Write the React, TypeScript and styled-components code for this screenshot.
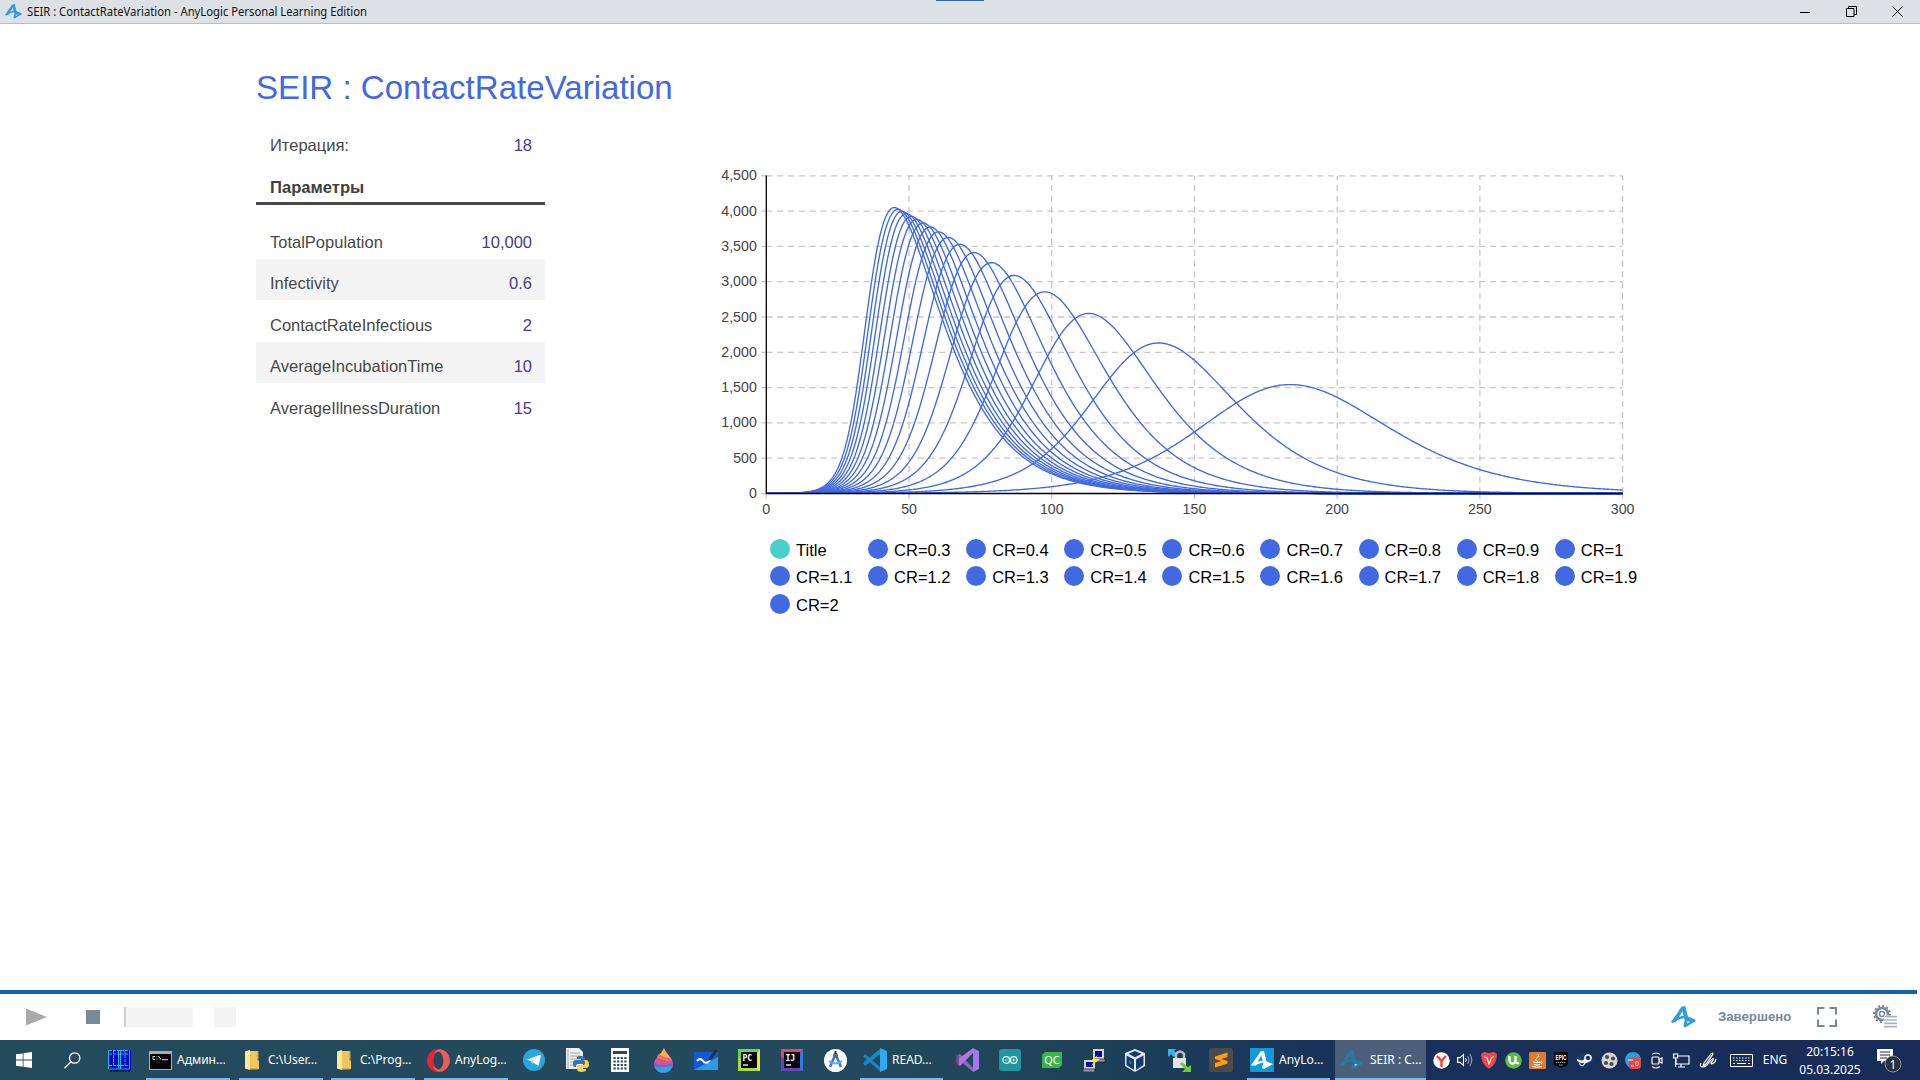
import React from "react";
import styled, { createGlobalStyle } from "styled-components";

const Global = createGlobalStyle`
  * { box-sizing: border-box; }
  body { margin: 0; background: #fff; overflow: hidden; }
`;

const sans = `"Liberation Sans", Arial, sans-serif`;
const ui = `"Noto Sans", "Open Sans", sans-serif`;

const Screen = styled.div`
  width: 1920px;
  height: 1080px;
  display: flex;
  flex-direction: column;
  background: #fff;
  font-family: ${sans};
  overflow: hidden;
`;

/* ---------- window title bar ---------- */

const TitleBar = styled.header`
  position: relative;
  flex: none;
  height: 24px;
  display: flex;
  align-items: center;
  background: #dde1e6;
  border-bottom: 1px solid #b9bdc1;
  padding-left: 5px;
`;
const SnapMark = styled.i`
  position: absolute;
  left: 936px;
  top: 0;
  width: 48px;
  height: 1px;
  background: #2d6aa5;
`;
const WindowTitle = styled.span`
  flex: 1;
  margin-left: 4px;
  font: 12px/22px ${ui};
  color: #111;
`;
const TitleText = styled.svg`
  display: block;
  width: 400px;
  height: 22px;
`;
const WindowButton = styled.span`
  width: 46px;
  height: 22px;
  display: grid;
  place-items: center;
`;

/* ---------- model area ---------- */

const Workspace = styled.main`
  flex: 1;
  min-height: 0;
  display: flex;
  flex-direction: column;
  padding: 43px 0 0 256px;
`;
const Heading = styled.h1`
  margin: 0;
  height: 41px;
  font: 33.1px/41px ${sans};
  color: #4169e1;
`;
const Columns = styled.div`
  display: flex;
  align-items: flex-start;
`;
const Panel = styled.section`
  width: 289px;
  padding-top: 17px;
`;
const Row = styled.div<{ $striped?: boolean; $pad?: number }>`
  display: flex;
  justify-content: space-between;
  height: ${(p) => (p.$striped ? 41 : 42)}px;
  padding: ${(p) => p.$pad ?? (p.$striped ? 4 : 5)}px 13px 0 14px;
  line-height: 41px;
  font-size: 16.5px;
  color: #484848;
  background: ${(p) => (p.$striped ? "#f4f4f4" : "transparent")};
`;
const Value = styled.span`
  color: #483d8b;
`;
const SectionTitle = styled.div`
  height: 38px;
  margin-bottom: 12px;
  padding-left: 14px;
  font-weight: 700;
  font-size: 16.6px;
  line-height: 41px;
  color: #404040;
  border-bottom: 3px solid #484848;
`;
const ChartArea = styled.section`
  margin: 52px 0 0 165px;
  width: 960px;
`;
const Plot = styled.svg`
  display: block;
  font-family: ${sans};
  font-size: 14.2px;
  fill: #444;
`;
const Legend = styled.div`
  display: grid;
  grid-template-columns: repeat(9, 98.1px);
  grid-auto-rows: 27.6px;
  margin: 15px 0 0 60px;
`;
const LegendItem = styled.div`
  display: flex;
  align-items: center;
  gap: 6px;
  font-size: 16.5px;
  color: #000;
  white-space: nowrap;
`;
const Dot = styled.i<{ $color: string }>`
  width: 20px;
  height: 20px;
  border-radius: 50%;
  background: ${(p) => p.$color};
`;
const LegendLabel = styled.span`
  padding-top: 3px;
`;

/* ---------- run control bar ---------- */

const ControlBar = styled.footer`
  flex: none;
  height: 46px;
  display: flex;
  align-items: flex-start;
`;
const Progress = styled.div`
  flex: none;
  height: 4px;
  width: 1917px;
  background: #1464a5;
`;
const PlayIcon = styled.svg`
  margin: 14px 0 0 26px;
`;
const StopIcon = styled.i`
  width: 14px;
  height: 14px;
  margin: 16px 0 0 39px;
  background: #778899;
`;
const Block = styled.i<{ $w: number; $gap: number; $edge?: boolean }>`
  width: ${(p) => p.$w}px;
  height: 20px;
  margin: 13px 0 0 ${(p) => p.$gap}px;
  background: #f4f4f4;
  border-left: ${(p) => (p.$edge ? "2px solid #d0d0d0" : "none")};
`;
const RightTools = styled.div`
  margin-left: auto;
  height: 46px;
  display: flex;
  align-items: center;
  padding-right: 22px;
`;
const Status = styled.span`
  width: 72px;
  margin: 0 27px 0 22px;
  font: 700 13.2px/20px ${sans};
  color: #778899;
  white-space: nowrap;
`;
const GearSlot = styled.span`
  display: flex;
  margin-left: 36px;
`;

/* ---------- taskbar ---------- */

const Taskbar = styled.nav`
  flex: none;
  height: 40px;
  display: flex;
  background: linear-gradient(90deg, #234b5c 0%, #224a5c 45%, #1d4159 57%, #193459 68%, #17305a 76%, #172c58 100%);
  color: #fff;
`;
const Slot = styled.div<{ $w: number }>`
  flex: none;
  width: ${(p) => p.$w}px;
  height: 40px;
  display: flex;
  align-items: center;
  justify-content: center;
`;
const Task = styled.div<{ $w: number; $gap: number; $active?: boolean }>`
  flex: none;
  width: ${(p) => p.$w}px;
  margin-left: ${(p) => p.$gap}px;
  height: 40px;
  display: flex;
  align-items: center;
  gap: 5px;
  padding-left: 3px;
  background: ${(p) => (p.$active ? "#4b5f7a" : "transparent")};
  border-bottom: 2px solid #76b9ed;
  padding-top: 2px;
`;
const TaskLabel = styled.span`
  font: 12px/20px ${ui};
  white-space: nowrap;
  color: #fff;
`;
const Clock = styled.div`
  width: 76px;
  font: 12px/18px ${ui};
  text-align: center;
  padding-top: 1px;
  color: #fff;
`;
const Tray = styled.div`
  flex: 1;
  display: flex;
`;

/* ---------- SEIR model ---------- */

const X0 = 56.3;
const Y0 = 333.5;
const SX = 856.3 / 300;
const SY = 317.7 / 4500;

function simulate(contactRate: number): string {
  const n = 10000, infectivity = 0.6, incubation = 10, illness = 15;
  const f = ([s, e, i]: number[]) => {
    const exposed = (i * contactRate * infectivity * s) / n;
    return [-exposed, exposed - e / incubation, e / incubation - i / illness];
  };
  const add = (a: number[], b: number[], k: number) => a.map((v, j) => v + b[j] * k);
  let y = [n - 1, 0, 1];
  const dt = 0.25;
  const pts: string[] = [];
  for (let t = 0; t <= 300; t += dt) {
    if ((t * 4) % 2 === 0) pts.push(`${(X0 + t * SX).toFixed(2)},${(Y0 - y[2] * SY).toFixed(2)}`);
    const k1 = f(y), k2 = f(add(y, k1, dt / 2)), k3 = f(add(y, k2, dt / 2)), k4 = f(add(y, k3, dt));
    y = y.map((v, j) => v + (dt / 6) * (k1[j] + 2 * k2[j] + 2 * k3[j] + k4[j]));
  }
  return pts.join(" ");
}

const rates = Array.from({ length: 18 }, (_, k) => (k + 3) / 10);
const curves = rates.map(simulate);

function Chart() {
  return (
    <Plot width="960" height="360" viewBox="0 0 960 360">
      <g stroke="#c8c8c8" strokeWidth="1.3" strokeDasharray="6.2 4.6">
        {Array.from({ length: 9 }, (_, k) => {
          const y = Y0 - (k + 1) * 500 * SY;
          return <line key={k} x1={X0} x2={X0 + 856.3} y1={y} y2={y} />;
        })}
        {Array.from({ length: 6 }, (_, k) => {
          const x = X0 + (k + 1) * 50 * SX;
          return <line key={k} x1={x} x2={x} y1={Y0} y2={Y0 - 317.7} />;
        })}
      </g>
      <g stroke="#b8b8b8">
        {Array.from({ length: 10 }, (_, k) => (
          <line key={k} x1={X0 - 5} x2={X0} y1={Y0 - k * 500 * SY} y2={Y0 - k * 500 * SY} />
        ))}
        {Array.from({ length: 7 }, (_, k) => (
          <line key={k} x1={X0 + k * 50 * SX} x2={X0 + k * 50 * SX} y1={Y0} y2={Y0 + 5} />
        ))}
      </g>
      <g fill="none" stroke="#4169e1" strokeWidth="1.35" strokeLinejoin="round">
        {curves.map((c, k) => <polyline key={k} points={c} />)}
      </g>
      <path d={`M${X0} ${Y0 - 318}V${Y0}H${X0 + 856.3}`} stroke="#000" strokeWidth="1.3" fill="none" />
      {Array.from({ length: 10 }, (_, k) => (
        <text key={k} x={X0 - 9.5} y={Y0 + 4.5 - k * 500 * SY} textAnchor="end">{(k * 500).toLocaleString("en-US")}</text>
      ))}
      {Array.from({ length: 7 }, (_, k) => (
        <text key={k} x={X0 + k * 50 * SX} y={Y0 + 20.5} textAnchor="middle">{k * 50}</text>
      ))}
    </Plot>
  );
}

/* ---------- icons ---------- */

const AnyLogic = ({ size = 25, color = "#2f9fd6" }: { size?: number; color?: string }) => (
  <svg width={size} height={size * 0.88} viewBox="0 0 25 22">
    <path d="M0 16.300 10.500 0.800 14.300 0 17.300 12.300 25 14.800 14.500 21.500 12.300 20.300 13.800 14.300 11.300 5.500 5 16Z" fill={color} />
    <path d="M1 16.300Q7 11 15 11L24 14.800" fill="none" stroke={color} strokeWidth="2.400" />
    <path d="m16 15.300 3.300.5-3.300 2Z" fill="#fff" opacity=".75" />
  </svg>
);
const Fullscreen = () => (
  <svg width="20" height="20" viewBox="0 0 20 20" fill="none" stroke="#778899" strokeWidth="2">
    <path d="M1 7.500V1h6.500M12.500 1H19v6.500M19 12.500V19h-6.500M7.500 19H1v-6.500" />
  </svg>
);
const Gear = () => (
  <svg width="25" height="24" viewBox="0 0 25 24">
    <circle cx="9" cy="9" r="6" fill="none" stroke="#778899" strokeWidth="2.600" />
    <circle cx="9" cy="9" r="8" fill="none" stroke="#778899" strokeWidth="2" strokeDasharray="2.1 2.08" />
    <circle cx="9" cy="9" r="2.500" fill="none" stroke="#778899" strokeWidth="1.500" />
    <path d="M11 10.500h14V23H10z" fill="#fff" />
    <path d="M12 11.700h12M11 15h13M11 18.300h13M11 21.600h13" stroke="#a9b4bf" strokeWidth="1.700" />
  </svg>
);
const WindowsLogo = () => (
  <svg width="16" height="16" viewBox="0 0 16 16" fill="#fff">
    <path d="M0 2.300 6.700 1.400V7.600H0zM7.500 1.200 16 0v7.600H7.500zM0 8.400h6.700v6.300L0 13.800zM7.500 8.400H16V16l-8.500-1.200z" />
  </svg>
);
const Search = () => (
  <svg width="17" height="17" viewBox="0 0 17 17" fill="none" stroke="#fff" strokeWidth="1.300">
    <circle cx="10.700" cy="6" r="5.200" /><path d="M7 9.800.500 16.300" />
  </svg>
);
const Far = () => (
  <svg width="23" height="23" viewBox="0 0 23 23">
    <path d="M0 1h23v21H2L0 20z" fill="#0008c8" />
    <path d="M.500 1v19h21V1M10.500 1v19M12.500 1v19" stroke="#18bbdd" fill="none" />
    <path d="M1 1.500h20M1 5h20M1 16.500h20M5.500 2v14M17 2v14" stroke="#18bbdd" fill="none" strokeDasharray="3 1" />
    <path d="M2 22h21" stroke="#071b21" strokeWidth="2" strokeDasharray="2 1" />
  </svg>
);
const Cmd = () => (
  <svg width="23" height="19" viewBox="0 0 23 19">
    <path d="M0 0h23v19H0z" fill="#a9adb0" /><path d="M1 3h21v15H1z" fill="#050505" />
    <path d="M6 5.500H4v3h2M8 5.500v.8M8 7.700v.8M9.500 5l2.500 3.700M13 8.700h6" stroke="#ddd" fill="none" />
  </svg>
);
const Folder = () => (
  <svg width="15" height="20" viewBox="0 0 15 20">
    <path d="M1 1h11v8l2 2v8H1z" fill="#f0c65b" /><path d="M0 1.500 5 0v20l-5-1.500z" fill="#fce99d" /><path d="M12 1h1.500v9L12 9zM5 18h8v1.500H5z" fill="#d8a943" />
  </svg>
);
const Opera = () => (
  <svg width="23" height="23" viewBox="0 0 23 23">
    <circle cx="11.500" cy="11.500" r="11.500" fill="#e32636" />
    <path d="M13 .300a11.300 11.300 0 0 1 0 22.400c-4 0-7-3.500-7-5.200 8 5 11-3 9-10.500-1-4-5-5-8-2.500C9 1.500 11 .300 13 .300z" fill="#f15b5b" />
    <ellipse cx="11.500" cy="11.500" rx="4.900" ry="8.700" fill="#234b5c" />
  </svg>
);
const Telegram = () => (
  <svg width="22" height="22" viewBox="0 0 22 22">
    <circle cx="11" cy="11" r="11" fill="#2ca5dc" />
    <path d="M4 10.800 17 5.700c.700-.200 1 .200.900.900L15.800 16c-.200.700-.700.800-1.200.500L8 12Z" fill="#fff" /><path d="M8.200 12 15 7.500 9.700 13 9.300 16Z" fill="#b6dbed" />
  </svg>
);
const PythonDoc = () => (
  <svg width="24" height="24" viewBox="0 0 24 24">
    <path d="M1 0h13l4 4v17H1z" fill="#edf0ee" /><path d="M3 1v20M5 5h10M5 8h11M5 11h10M5 14h5M5 17h5" stroke="#929b9b" strokeWidth=".8" />
    <path d="M13 8h4q3 0 3 3v3q0 2-3 2h-4q-2 0-2 3H9q-1-1-1-4 0-3 3-3h5v-1h-4V9z" fill="#3977a8" />
    <path d="M19 12h3q2 1 2 5 0 3-3 3h-4v1h4v2l-4 1q-5 0-5-3v-2q0-2 3-2h3q2 0 2-3z" fill="#f7cf4d" />
  </svg>
);
const Calculator = () => (
  <svg width="18" height="24" viewBox="0 0 18 24">
    <path d="M0 0h18v24H0z" fill="#fff" /><path d="M2 3h14v3H2z" fill="#234b5c" />
    <path d="M2.500 10h13M2.500 13.500h13M2.500 17h13M2.500 20.500h13" stroke="#234b5c" strokeWidth="2" strokeDasharray="2.200 1.400" />
  </svg>
);
const Drop = () => (
  <svg width="19" height="25" viewBox="0 0 19 25">
    <path d="M10 0c2 5 9 10 9 16a9.500 9 0 0 1-19 0C0 10 8 6 10 0z" fill="#d85491" />
    <path d="M10 0c1 4 5 7 7 11Q11 14 3 9 8 5 10 0z" fill="#ffae44" /><path d="M3 8q6 5 15 5l-1-3Q10 10 5 6z" fill="#f26a6d" /><path d="M0 15q9 4 19 0a9.500 9 0 0 1-19 2z" fill="#6b66d6" /><path d="M1 19q8 1 17-1a9 9 0 0 1-17 1z" fill="#27a9e6" />
  </svg>
);
const Whiteboard = () => (
  <svg width="25" height="22" viewBox="0 0 25 22">
    <path d="M0 3h24v18H0z" fill="#1756d7" /><path d="M0 21 24 8v13z" fill="#2a9be7" />
    <path d="M3 12q3-4 6 0t7-1" stroke="#fff" strokeWidth="2" fill="none" /><path d="m15 9 6-9 3 2-6 8-4 2z" fill="#26323f" />
  </svg>
);
const JetBrains = ({ label, a, b, c }: { label: string; a: string; b: string; c: string }) => (
  <svg width="22" height="22" viewBox="0 0 22 22">
    <path d="M0 0h22v22H0z" fill={a} /><path d="M22 0v22H8z" fill={b} /><path d="M0 22V8l22 14z" fill={c} /><path d="M3 3h16v16H3z" fill="#080808" />
    <text x="4.500" y="11.500" fill="#fff" fontFamily="DejaVu Sans Mono" fontSize="8" fontWeight="700">{label}</text><path d="M5 16h5" stroke="#fff" strokeWidth="1.300" />
  </svg>
);
const AndroidStudio = () => (
  <svg width="23" height="23" viewBox="0 0 23 23">
    <circle cx="11.500" cy="11.500" r="11.500" fill="#fff" /><path d="M11.500 5 6 18M11.500 5 17 18" stroke="#3c78d8" strokeWidth="2.600" /><path d="M5 12q6 5 13 0" stroke="#68a4ef" strokeWidth="2" fill="none" /><circle cx="11.500" cy="6.500" r="2.500" fill="#456a91" /><path d="M11.500 2v3" stroke="#333" strokeWidth="2" />
  </svg>
);
const VsCode = ({ color = "#1788ce", edge = "#32a9ed" }: { color?: string; edge?: string }) => (
  <svg width="24" height="24" viewBox="0 0 24 24">
    <path d="M2 6 17 19v4L0 8.500zM0 15 17 1v5L2 18z" fill={color} /><path d="m17 0 7 3v18l-7 3z" fill={edge} />
  </svg>
);
const Arduino = () => (
  <svg width="22" height="22" viewBox="0 0 22 22">
    <rect width="22" height="22" rx="3" fill="#20979d" /><circle cx="7.300" cy="11" r="3.300" stroke="#e1f5f2" strokeWidth="1.300" fill="none" /><circle cx="14.700" cy="11" r="3.300" stroke="#e1f5f2" strokeWidth="1.300" fill="none" /><path d="M6 11h2.500M13.500 11H16M14.700 9.800v2.400" stroke="#fff" strokeWidth=".8" />
  </svg>
);
const Qc = () => (
  <svg width="20" height="16" viewBox="0 0 20 16">
    <path d="M3 0h17v13l-3 3H0V3z" fill="#39b44a" /><text x="10" y="12" textAnchor="middle" fill="#fff" fontFamily="Noto Sans" fontSize="11">QC</text>
  </svg>
);
const Putty = () => (
  <svg width="23" height="23" viewBox="0 0 23 23">
    <path d="M10 0h11v10H10zM1 11h11v9H1z" fill="#d5d5d0" /><path d="M12 2h7v6h-7zM3 13h7v5H3z" fill="#000bb5" /><path d="M9 10h13v3H10zM0 20h12v3H0z" fill="#9a9a96" stroke="#111" strokeWidth=".7" /><path d="m15 6-9 7h5l-3 4 9-7h-5z" fill="#ffeb24" />
  </svg>
);
const Vbox = () => (
  <svg width="20" height="23" viewBox="0 0 20 23">
    <path d="M10 0 20 4v13l-10 6L0 17V4z" fill="#dbe6f0" /><path d="m3.500 4.700 6.500 3.500 6.500-3.500L10 2zM1.500 6.500 9 10.500V21l-7.500-5zM18.500 6.500 11 10.500V21l7.500-5z" fill="#173b68" /><path d="m4 11 2.500 1.400v3L4 14z" fill="#3d6797" />
  </svg>
);
const WinScp = () => (
  <svg width="23" height="23" viewBox="0 0 23 23">
    <path d="M0 0h8L6 2l3 3-3 3-3-3-3 3z" fill="#36b6e6" /><path d="M8 9V5q4-5 8 0v4" stroke="#b9bec2" strokeWidth="2.500" fill="none" /><path d="M5 9h13v10H5z" fill="#e2e4e5" /><path d="m14 13 6 5 3-2v7h-9l3-3-5-5z" fill="#6fcb3e" />
  </svg>
);
const Sublime = () => (
  <svg width="24" height="24" viewBox="0 0 24 24">
    <rect width="24" height="24" rx="2" fill="#4b4b4b" /><path d="M6 8.500 18.500 4.500V9l-6.300 2 6.300 2v2.500L6 19.500V15l6.300-2L6 11z" fill="#ff9c12" />
  </svg>
);
const VisualStudio = () => (
  <svg width="25" height="24" viewBox="0 0 25 24">
    <path d="m2 7 3-1 13 14v4L2 10z" fill="#9760c7" /><path d="m2 16 3 2L18 5V0L2 12z" fill="#ad79dc" /><path d="m18 0 6 3v18l-6 3z" fill="#a477e8" /><path d="M1 7h3v10l-3-2z" fill="#70449b" />
  </svg>
);
const AnyLogicTile = () => (
  <svg width="24" height="24" viewBox="0 0 24 24">
    <path d="M0 0h24v24H0z" fill="#109bd7" /><path d="M1 17.500 10.500 3.500 14 3l2.500 10.500 6.500 2.500-9 5-2-1 1.500-5.500-2.500-7-5 10z" fill="#fff" /><path d="m3 16.500 13-4" stroke="#fff" strokeWidth="2" />
  </svg>
);

/* tray */
const Yandex = () => (
  <svg width="17" height="17" viewBox="0 0 17 17"><circle cx="8.500" cy="8.500" r="8.200" fill="#fff" /><path d="m4 4 4.500 5L13 4M8.500 8.500V15" stroke="#f0483e" strokeWidth="2.500" fill="none" /></svg>
);
const Volume = () => (
  <svg width="17" height="14" viewBox="0 0 17 14" fill="none" stroke="#fff" strokeWidth="1.100"><path d="M.600 4.600H3L6.500 1.500v11L3 9.400H.600zM8.500 5q1.500 2 0 4" /><path d="M10.500 3q3 4 0 8M12.800 1q4 6 0 12" stroke="#93a4b8" /></svg>
);
const Shield = () => (
  <svg width="16" height="17" viewBox="0 0 16 17"><path d="M0 2 3 0l5 1 5-1 3 2q0 10-8 15Q0 12 0 2z" fill="#e64b50" /><path d="m3.500 5 2.500 1 2 6 2.500-6 2-1.500" stroke="#ffd9d9" strokeWidth="1.300" fill="none" /></svg>
);
const Utorrent = () => (
  <svg width="17" height="17" viewBox="0 0 17 17"><circle cx="8.500" cy="8.500" r="8.300" fill="#5fb946" /><path d="M4.500 4v4q0 4 4 3.500 2-.500 2-3V4M10.500 8q0 4 3.500 3" stroke="#fff" strokeWidth="2.300" fill="none" /></svg>
);
const Java = () => (
  <svg width="17" height="17" viewBox="0 0 17 17"><rect width="17" height="17" rx="1" fill="#e77b25" /><path d="M9 2q2 2-1 4t1 4M4 10q4 1.500 8 0M5 12.500q3 1 6 0M3 14.500q5 1.500 10 0M12 9q3 1 0 3" stroke="#fff" fill="none" /></svg>
);
const Epic = () => (
  <svg width="14" height="16" viewBox="0 0 14 16"><path d="M0 0h14v13l-7 3-7-3z" fill="#0b0b0b" /><text x="1.500" y="8" fill="#fff" fontFamily="Liberation Sans" fontSize="7.500" fontWeight="700" textLength="11" lengthAdjust="spacingAndGlyphs">EPIC</text><path d="M2 10.500h10M5 13h4" stroke="#999" strokeDasharray="1.500 .5" /></svg>
);
const Steam = () => (
  <svg width="17" height="16" viewBox="0 0 17 16"><circle cx="8" cy="8" r="7.800" fill="#173a62" /><circle cx="11" cy="6" r="3" stroke="#fff" strokeWidth="1.500" fill="none" /><path d="m0 8 5 2 4-3M7 11l4-2" stroke="#fff" strokeWidth="2" fill="none" /><circle cx="5" cy="11.500" r="2.300" stroke="#fff" fill="none" /></svg>
);
const Reel = () => (
  <svg width="17" height="17" viewBox="0 0 17 17"><circle cx="8.500" cy="8.500" r="8" fill="#d4d4d4" /><g fill="#4b4b4b"><circle cx="6" cy="5" r="2.100" /><circle cx="12" cy="6.500" r="2.100" /><circle cx="5" cy="11" r="2.100" /><circle cx="10.500" cy="12" r="2.100" /></g></svg>
);
const Badged = () => (
  <svg width="17" height="17" viewBox="0 0 17 17"><circle cx="8" cy="8" r="8" fill="#2b9edc" /><rect x="4" y="5" width="12" height="12" rx="3" fill="#e74649" /><path d="M3 8h5M6 14h3" stroke="#fff" /><text x="10" y="14" fill="#fff" fontFamily="Noto Sans" fontSize="7">0</text></svg>
);
const Meet = () => (
  <svg width="12" height="17" viewBox="0 0 12 17" fill="none" stroke="#fff" strokeWidth="1.200"><path d="M1 2.500q4-3 8 0M1 14.500q4 3 8 0M8 7.500l3-1.500v5L8 9.500" /><rect x="1" y="5" width="7" height="7" rx="1" /></svg>
);
const Network = () => (
  <svg width="17" height="15" viewBox="0 0 17 15" fill="none" stroke="#fff" strokeWidth="1.200"><path d="M5 3h11v8H3V6M.600 1h4v4h-4zM2.600 5v9M8 11v3M5 14h7" /></svg>
);
const Pen = () => (
  <svg width="18" height="16" viewBox="0 0 18 16" fill="none" stroke="#fff" strokeWidth="1.200"><path d="m4 11 7-9q2-2 2 0L6 12l-3 2zM1 11q-2 4 2 4 2 0 4-2l4-5q3-3 2 0l-2 3q0 2 4-1l1-3" /></svg>
);
const Keyboard = () => (
  <svg width="23" height="13" viewBox="0 0 23 13" fill="none" stroke="#fff"><path d="M.500.500h22v12H.500z" /><path d="M3 4h17M3 6.500h17" strokeDasharray="1.500 1.500" /><path d="M3 9.500h2M7 9.500h9M18 9.500h2" /></svg>
);
const Notifications = () => (
  <svg width="26" height="26" viewBox="0 0 26 26">
    <path d="M0 2h16v12H7l-3 3v-3H0z" fill="#fff" /><path d="M3 5h10M3 8h10M3 11h7" stroke="#172c58" /><circle cx="16" cy="17" r="8" fill="#2a3038" stroke="#89909b" /><text x="16" y="21.500" textAnchor="middle" fill="#fff" fontFamily="Noto Sans" fontSize="12">1</text>
  </svg>
);

const params: [string, string][] = [
  ["TotalPopulation", "10,000"],
  ["Infectivity", "0.6"],
  ["ContactRateInfectious", "2"],
  ["AverageIncubationTime", "10"],
  ["AverageIllnessDuration", "15"],
];
const legend = ["Title", ...rates.map((r) => `CR=${r}`)];

export default function App() {
  return (
    <Screen>
      <Global />
      <TitleBar>
        <SnapMark />
        <AnyLogic size={17} />
        <WindowTitle>
          <TitleText><text x="1" y="15" fontSize="12" fill="#111" textLength="340" lengthAdjust="spacingAndGlyphs">SEIR : ContactRateVariation - AnyLogic Personal Learning Edition</text></TitleText>
        </WindowTitle>
        <WindowButton><svg width="10" height="10"><path d="M0 5.500h10" stroke="#000" /></svg></WindowButton>
        <WindowButton><svg width="11" height="11" fill="none" stroke="#000"><path d="M.500 2.500h7.500v8H.500zM2.500 2.500v-2h8v8H8" /></svg></WindowButton>
        <WindowButton><svg width="11" height="11"><path d="m.500.500 10 10m0-10-10 10" stroke="#000" /></svg></WindowButton>
      </TitleBar>

      <Workspace>
        <Heading>SEIR : ContactRateVariation</Heading>
        <Columns>
          <Panel>
            <Row $pad={0}><span>Итерация:</span><Value>18</Value></Row>
            <SectionTitle>Параметры</SectionTitle>
            {params.map(([name, value], k) => (
              <Row key={name} $striped={k % 2 === 1}><span>{name}</span><Value>{value}</Value></Row>
            ))}
          </Panel>
          <ChartArea>
            <Chart />
            <Legend>
              {legend.map((name, k) => (
                <LegendItem key={name}><Dot $color={k ? "#4169e1" : "#48d1cc"} /><LegendLabel>{name}</LegendLabel></LegendItem>
              ))}
            </Legend>
          </ChartArea>
        </Columns>
      </Workspace>

      <Progress />
      <ControlBar>
        <PlayIcon width="21" height="18" viewBox="0 0 21 18"><path d="M0 .500 21 9 0 17.500z" fill="#a9a9a9" /></PlayIcon>
        <StopIcon />
        <Block $w={69} $gap={24} $edge />
        <Block $w={22} $gap={21} />
        <RightTools>
          <AnyLogic />
          <Status>Завершено</Status>
          <Fullscreen />
          <GearSlot><Gear /></GearSlot>
        </RightTools>
      </ControlBar>

      <Taskbar>
        <Slot $w={48}><WindowsLogo /></Slot>
        <Slot $w={48}><Search /></Slot>
        <Slot $w={46}><Far /></Slot>
        <Task $w={84} $gap={4}><Cmd /><TaskLabel>Админ...</TaskLabel></Task>
        <Task $w={84} $gap={9}><Slot $w={21}><Folder /></Slot><TaskLabel>C:\User...</TaskLabel></Task>
        <Task $w={84} $gap={8}><Slot $w={21}><Folder /></Slot><TaskLabel>C:\Prog...</TaskLabel></Task>
        <Task $w={84} $gap={9}><Opera /><TaskLabel>AnyLog...</TaskLabel></Task>
        <Slot $w={51}><Telegram /></Slot>
        <Slot $w={36}><PythonDoc /></Slot>
        <Slot $w={50}><Calculator /></Slot>
        <Slot $w={36}><Drop /></Slot>
        <Slot $w={50}><Whiteboard /></Slot>
        <Slot $w={36}><JetBrains label="PC" a="#65d546" b="#e8ec39" c="#a8dd42" /></Slot>
        <Slot $w={50}><JetBrains label="IJ" a="#e34179" b="#2b7cec" c="#6942b9" /></Slot>
        <Slot $w={36}><AndroidStudio /></Slot>
        <Task $w={83} $gap={7}><VsCode /><TaskLabel>READ...</TaskLabel></Task>
        <Slot $w={49}><VisualStudio /></Slot>
        <Slot $w={36}><Arduino /></Slot>
        <Slot $w={48}><Qc /></Slot>
        <Slot $w={36}><Putty /></Slot>
        <Slot $w={46}><Vbox /></Slot>
        <Slot $w={42}><WinScp /></Slot>
        <Slot $w={42}><Sublime /></Slot>
        <Task $w={83} $gap={5}><AnyLogicTile /><TaskLabel>AnyLo...</TaskLabel></Task>
        <Task $w={91} $gap={5} $active><Slot $w={27}><AnyLogic size={23} color="#267ba2" /></Slot><TaskLabel>SEIR : C...</TaskLabel></Task>
        <Tray>
          <Slot $w={30}><Yandex /></Slot>
          <Slot $w={18}><Volume /></Slot>
          <Slot $w={30}><Shield /></Slot>
          <Slot $w={18}><Utorrent /></Slot>
          <Slot $w={30}><Java /></Slot>
          <Slot $w={18}><Epic /></Slot>
          <Slot $w={30}><Steam /></Slot>
          <Slot $w={18}><Reel /></Slot>
          <Slot $w={30}><Badged /></Slot>
          <Slot $w={18}><Meet /></Slot>
          <Slot $w={30}><Network /></Slot>
          <Slot $w={26}><Pen /></Slot>
          <Slot $w={38}><Keyboard /></Slot>
          <Slot $w={30}><TaskLabel>ENG</TaskLabel></Slot>
          <Slot $w={80}><Clock>20:15:16<br />05.03.2025</Clock></Slot>
          <Slot $w={40}><Notifications /></Slot>
        </Tray>
      </Taskbar>
    </Screen>
  );
}
